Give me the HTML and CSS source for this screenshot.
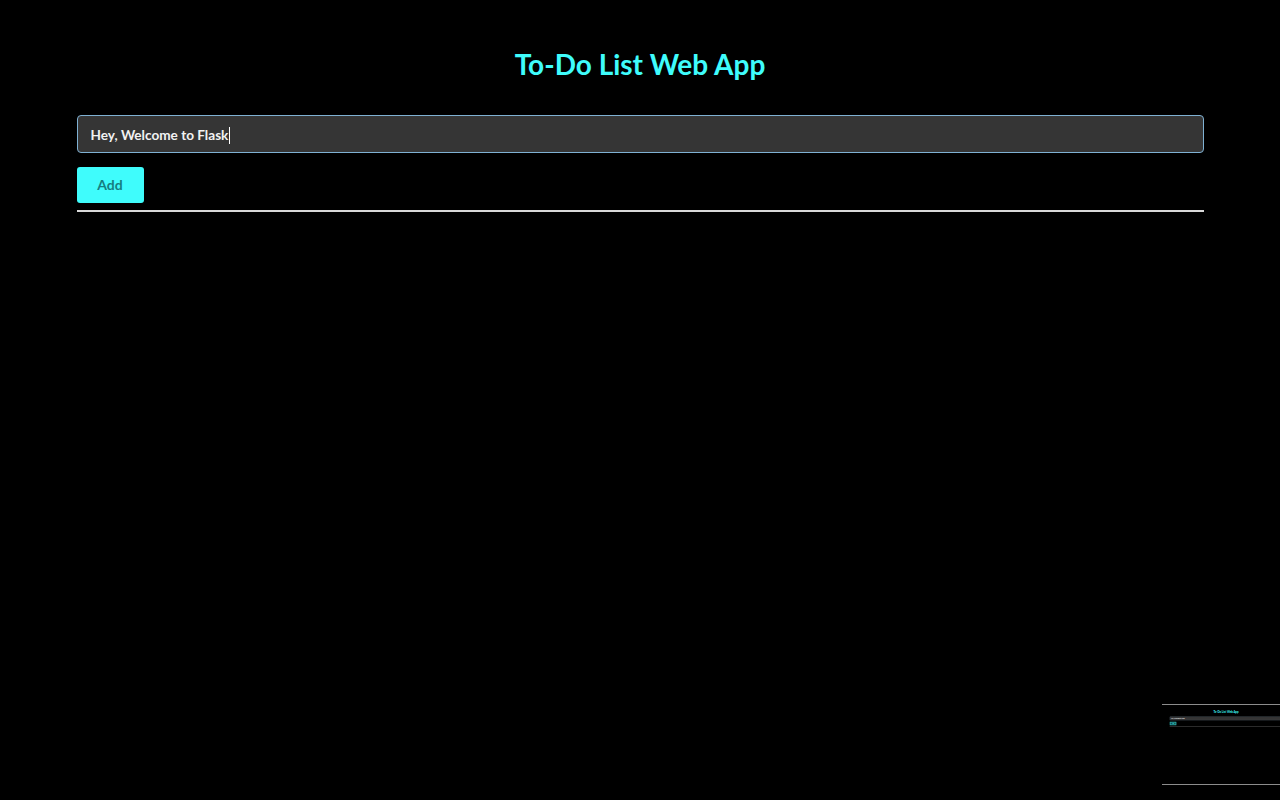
FILE: index.html
```html
<!DOCTYPE html>
<html lang="en">
<head>
<meta charset="utf-8">
<title>To-Do List Web App</title>
<link rel="stylesheet" href="styles.css">
</head>
<body>
<main class="app">
  <h1 class="title">To-Do List Web App</h1>
  <form class="todo-form">
    <div class="input-box"><span class="input-text">Hey, Welcome to Flask</span><span class="caret"></span></div>
    <button type="button" class="add-btn">Add</button>
  </form>
  <hr class="divider">
</main>
<div class="minimap">
  <div class="mini-page">
    <main class="app">
      <h1 class="title">To-Do List Web App</h1>
      <form class="todo-form">
        <div class="input-box"><span class="input-text">Hey, Welcome to Flask</span></div>
        <button type="button" class="add-btn mini-btn">Add</button>
      </form>
      <hr class="divider">
    </main>
  </div>
</div>
</body>
</html>
```
FILE: styles.css
```css
html, body {
  margin: 0;
  padding: 0;
  background: #000;
  height: 100%;
  overflow: hidden;
}
body {
  font-family: Lato, "Open Sans", sans-serif;
  color: #fff;
}
.app {
  width: 1127px;
  margin: 0 auto;
  padding-top: 45px;
}
.title {
  margin: 0;
  text-align: center;
  color: #3ffcfc;
  font-size: 28px;
  font-weight: 700;
  line-height: 38px;
}
.todo-form {
  margin-top: 32px;
  display: flex;
  flex-direction: column;
  align-items: flex-start;
  gap: 14px;
}
.input-box {
  box-sizing: border-box;
  width: 100%;
  height: 38px;
  background: #353535;
  border: 1px solid #7fb1d3;
  border-radius: 4px;
  display: flex;
  align-items: center;
  padding: 2px 0 0 13px;
}
.input-text {
  font-size: 13.6px;
  font-weight: 700;
  color: #f2f2f2;
}
.caret {
  display: inline-block;
  width: 1px;
  height: 17px;
  background: #fff;
  margin-left: 1px;
}
.add-btn {
  width: 67px;
  height: 36px;
  border: none;
  border-radius: 3px;
  background: #3ffcfc;
  color: #167d80;
  font-family: Lato, "Open Sans", sans-serif;
  font-size: 14px;
  font-weight: 700;
  padding: 0 0 2px;
}
.divider {
  margin: 7px 0 0;
  border: none;
  height: 2px;
  background: #d9d9d9;
}
.minimap {
  position: fixed;
  left: 1162px;
  top: 704px;
  width: 128px;
  height: 79px;
  border-top: 1px solid #8c8c8c;
  border-bottom: 1px solid #8c8c8c;
  background: #000;
  overflow: hidden;
}
.mini-page {
  width: 1280px;
  height: 800px;
  transform: scale(0.1);
  transform-origin: 0 0;
}
.mini-btn {
  background: #0b3a3a;
  border: 10px solid #2aa5a5;
  color: #3ffcfc;
}
```
